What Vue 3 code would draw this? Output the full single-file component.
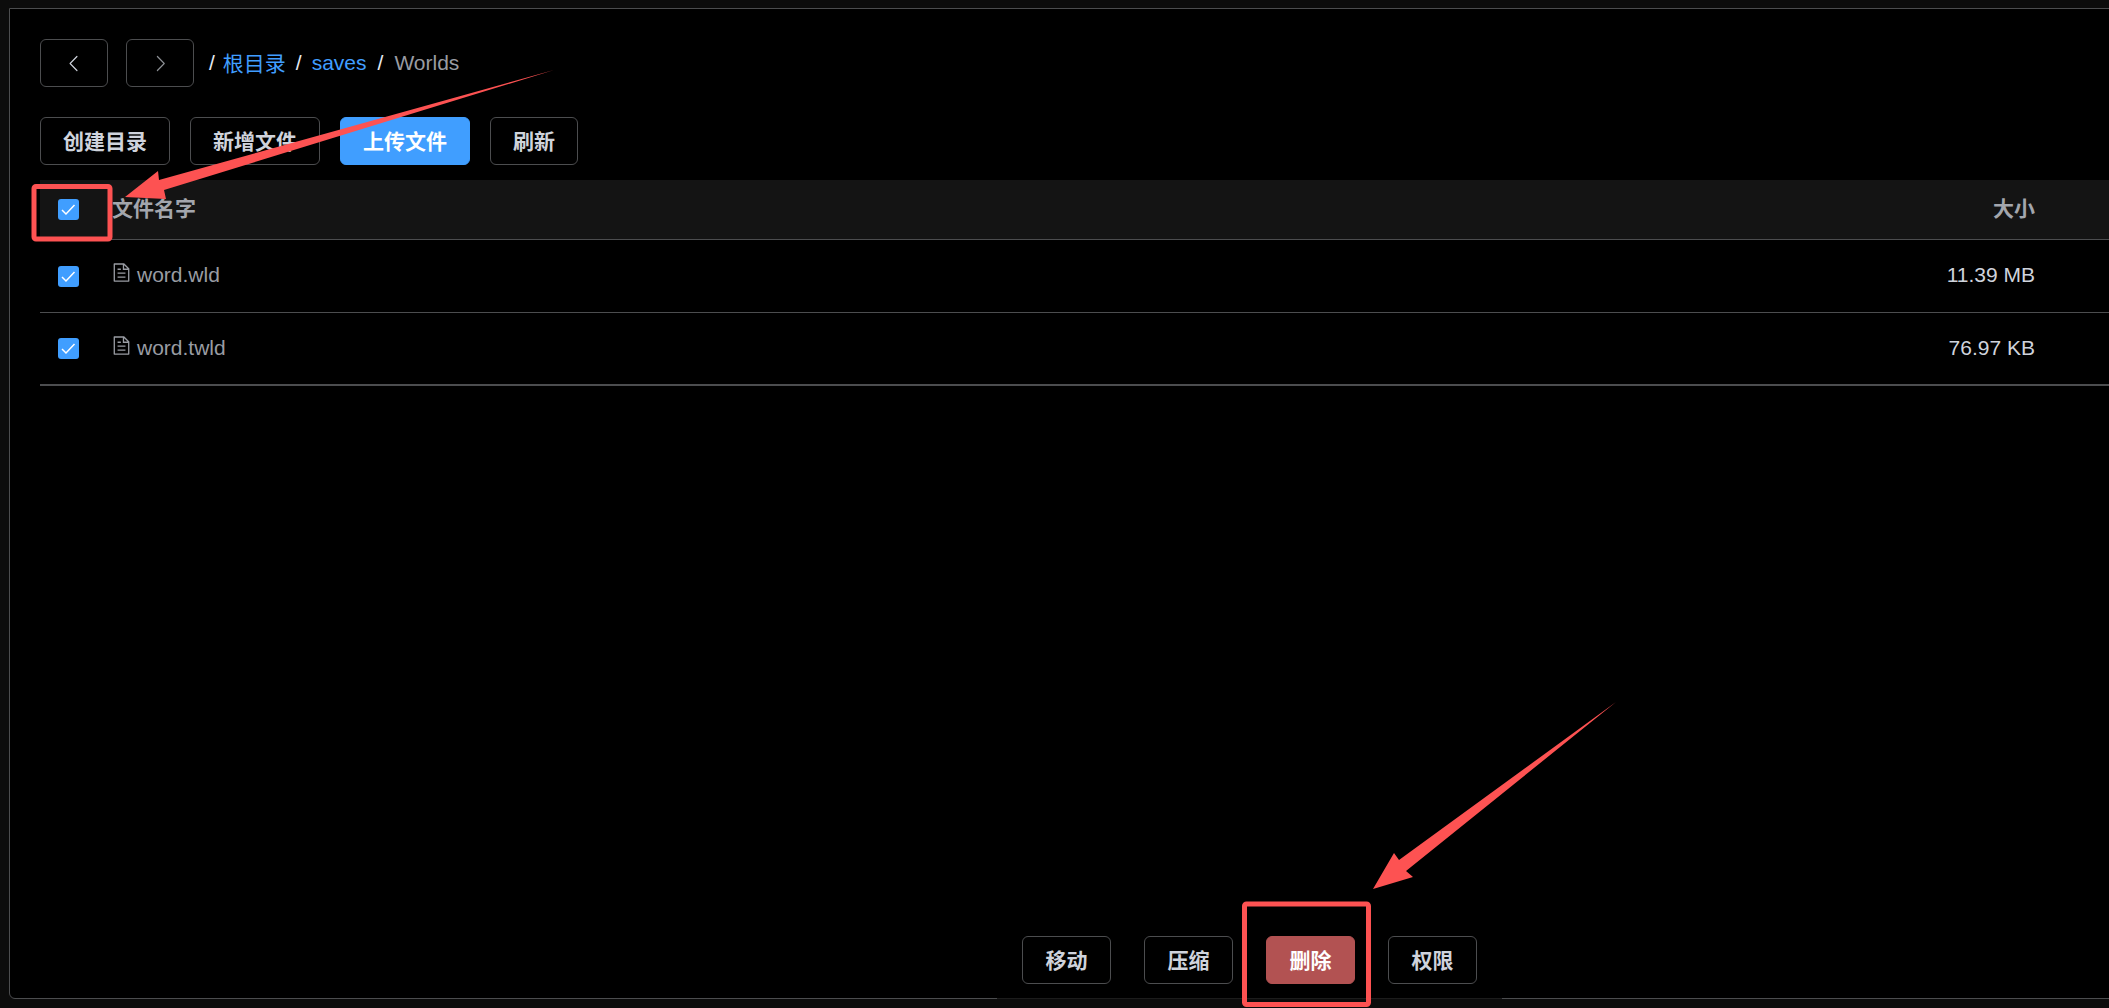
<script setup>
const tools = [
  { label: "创建目录" },
  { label: "新增文件" },
  { label: "上传文件", primary: true },
  { label: "刷新" }
];
const files = [
  { name: "word.wld", size: "11.39 MB" },
  { name: "word.twld", size: "76.97 KB" }
];
const actions = [
  { label: "移动" },
  { label: "压缩" },
  { label: "删除", danger: true },
  { label: "权限" }
];
</script>

<template>
  <div class="page">
    <section class="card">
      <div class="nav">
        <button type="button" class="btn btn--icon">
          <svg class="icon" viewBox="0 0 1024 1024"><path fill="currentColor" d="M609.408 149.376 277.76 489.6a32 32 0 0 0 0 44.672l331.648 340.352a29.12 29.12 0 0 0 41.728 0 30.592 30.592 0 0 0 0-42.752L339.264 511.936l311.872-319.872a30.592 30.592 0 0 0 0-42.688 29.12 29.12 0 0 0-41.728 0z"/></svg>
        </button>
        <button type="button" class="btn btn--icon btn--dim">
          <svg class="icon" viewBox="0 0 1024 1024"><path fill="currentColor" d="M340.864 149.312a30.592 30.592 0 0 0 0 42.752L652.736 512 340.864 831.872a30.592 30.592 0 0 0 0 42.752 29.12 29.12 0 0 0 41.728 0L714.24 534.336a32 32 0 0 0 0-44.672L382.592 149.376a29.12 29.12 0 0 0-41.728 0z"/></svg>
        </button>
        <div class="crumbs">
          <span class="crumbs__sep">/</span>
          <a class="crumbs__link crumbs__link--cjk">根目录</a>
          <span class="crumbs__sep crumbs__sep--wide">/</span>
          <a class="crumbs__link crumbs__link--saves">saves</a>
          <span class="crumbs__sep crumbs__sep--wide">/</span>
          <span class="crumbs__current">Worlds</span>
        </div>
      </div>

      <div class="tools">
        <button
          v-for="tool in tools"
          :key="tool.label"
          type="button"
          class="btn"
          :class="{ 'btn--primary': tool.primary }"
        >
          {{ tool.label }}
        </button>
      </div>

      <div class="table">
        <div class="table__row table__row--head">
          <span class="check">
            <svg viewBox="0 0 21 21"><path d="M4 11 8 15 16.5 6" /></svg>
          </span>
          <span class="table__name">文件名字</span>
          <span class="table__size">大小</span>
        </div>
        <div v-for="file in files" :key="file.name" class="table__row">
          <span class="check">
            <svg viewBox="0 0 21 21"><path d="M4 11 8 15 16.5 6" /></svg>
          </span>
          <span class="table__name">
            <svg class="icon file-icon" viewBox="0 0 1024 1024"><path fill="currentColor" d="M832 384H576V128H192v768h640V384zm-26.496-64L640 154.496V320h165.504zM160 64h480l256 256v608a32 32 0 0 1-32 32H160a32 32 0 0 1-32-32V96a32 32 0 0 1 32-32zm160 448h384v64H320v-64zm0-192h160v64H320v-64zm0 384h384v64H320v-64z"/></svg>
            {{ file.name }}
          </span>
          <span class="table__size">{{ file.size }}</span>
        </div>
      </div>

      <div class="actions">
        <button
          v-for="action in actions"
          :key="action.label"
          type="button"
          class="btn btn--small"
          :class="{ 'btn--danger': action.danger }"
        >
          {{ action.label }}
        </button>
      </div>
    </section>

    <!-- red annotations drawn over the screenshot -->
    <svg class="marks" viewBox="0 0 2109 1008">
      <rect x="34" y="186.5" width="76" height="52.5" rx="2" class="marks__box" />
      <rect x="1244.5" y="904" width="124" height="100.5" rx="2" class="marks__box" />
      <polygon points="554,70 159,180 158,171 125,197 166,199 164,190" class="marks__arrow" />
      <polygon points="1616,702 1399,860 1394,853 1373,889 1413,877 1406,871" class="marks__arrow" />
    </svg>
  </div>
</template>

<style scoped>
.page {
  position: relative;
  box-sizing: border-box;
  width: 2109px;
  height: 1008px;
  padding: 8px 0 0 9px;
  overflow: hidden;
  background: #0c0c0c;
  color: #cfd3dc;
  font-family: "Liberation Sans", "Noto Sans CJK SC", sans-serif;
  font-size: 21px;
}

.card {
  position: relative;
  box-sizing: border-box;
  width: 2140px;
  height: 991px;
  padding: 30px 20px 0 30px;
  background: #000;
  border: 1px solid #4c4d4f;
  border-radius: 0 0 6px 6px;
}

.nav {
  display: flex;
  align-items: center;
  gap: 18px;
}

.btn {
  box-sizing: border-box;
  height: 48px;
  padding: 0 22px 2px;
  color: #cfd3dc;
  background: transparent;
  border: 1px solid #4c4d4f;
  border-radius: 6px;
  font: inherit;
  font-weight: 700;
}

.btn--icon {
  display: flex;
  align-items: center;
  justify-content: center;
  width: 68px;
  padding: 0;
}

.btn--dim {
  color: #8d9095;
}

.btn--primary {
  color: #fff;
  background: #409eff;
  border-color: #409eff;
}

.btn--small {
  width: 89px;
  padding: 0 0 2px;
}

.btn--danger {
  color: #fff;
  background: #b25252;
  border-color: #b25252;
}

.icon {
  display: block;
  width: 21px;
  height: 21px;
}

.crumbs {
  display: flex;
  align-items: center;
  margin-left: -3px;
  color: #e5eaf3;
}

.crumbs__sep {
  margin-right: 8px;
}

.crumbs__sep--wide {
  margin: 0 11px 0 10px;
}

.crumbs__link {
  color: #409eff;
}

.crumbs__link--cjk {
  padding-bottom: 3px;
}

.crumbs__link--saves {
  margin-left: -1px;
  margin-right: 1px;
}

.crumbs__current {
  color: #999ca3;
}

.tools {
  display: flex;
  gap: 20px;
  margin-top: 30px;
}

.table {
  margin-top: 15px;
}

.table__row {
  display: grid;
  grid-template-columns: 72px 1fr auto;
  align-items: center;
  height: 73px;
  padding-right: 93px;
  box-sizing: border-box;
  border-bottom: 1px solid #4c4d4f;
}

.table__row:last-child {
  border-bottom-width: 2px;
}

.table__row--head {
  height: 60px;
  color: #a3a6ad;
  font-weight: 700;
  background: #141414;
}

.table__name,
.table__size {
  padding-bottom: 2px;
}

.table__row--head .table__name,
.table__row--head .table__size {
  padding-bottom: 5px;
}

.check {
  display: block;
  width: 21px;
  height: 21px;
  margin-left: 18px;
  background: #409eff;
  border-radius: 3px;
}

.check svg {
  display: block;
  fill: none;
  stroke: #fff;
  stroke-width: 1.5;
}

.table__name {
  display: flex;
  align-items: center;
  gap: 5px;
  color: #999ca3;
}

.table__row--head .table__name {
  color: #a3a6ad;
}

.file-icon {
  margin: -5px 0 0 -1px;
}

.actions {
  position: absolute;
  left: 987px;
  bottom: -1px;
  display: flex;
  justify-content: center;
  gap: 33px;
  width: 505px;
  padding: 0 0 14px;
  background: #000;
  border-bottom: 1px solid #1c1c1c;
}

.marks {
  position: absolute;
  inset: 0;
  width: 2109px;
  height: 1008px;
  pointer-events: none;
}

.marks__box {
  fill: none;
  stroke: #fd5252;
  stroke-width: 5;
}

.marks__arrow {
  fill: #fd5252;
}
</style>
